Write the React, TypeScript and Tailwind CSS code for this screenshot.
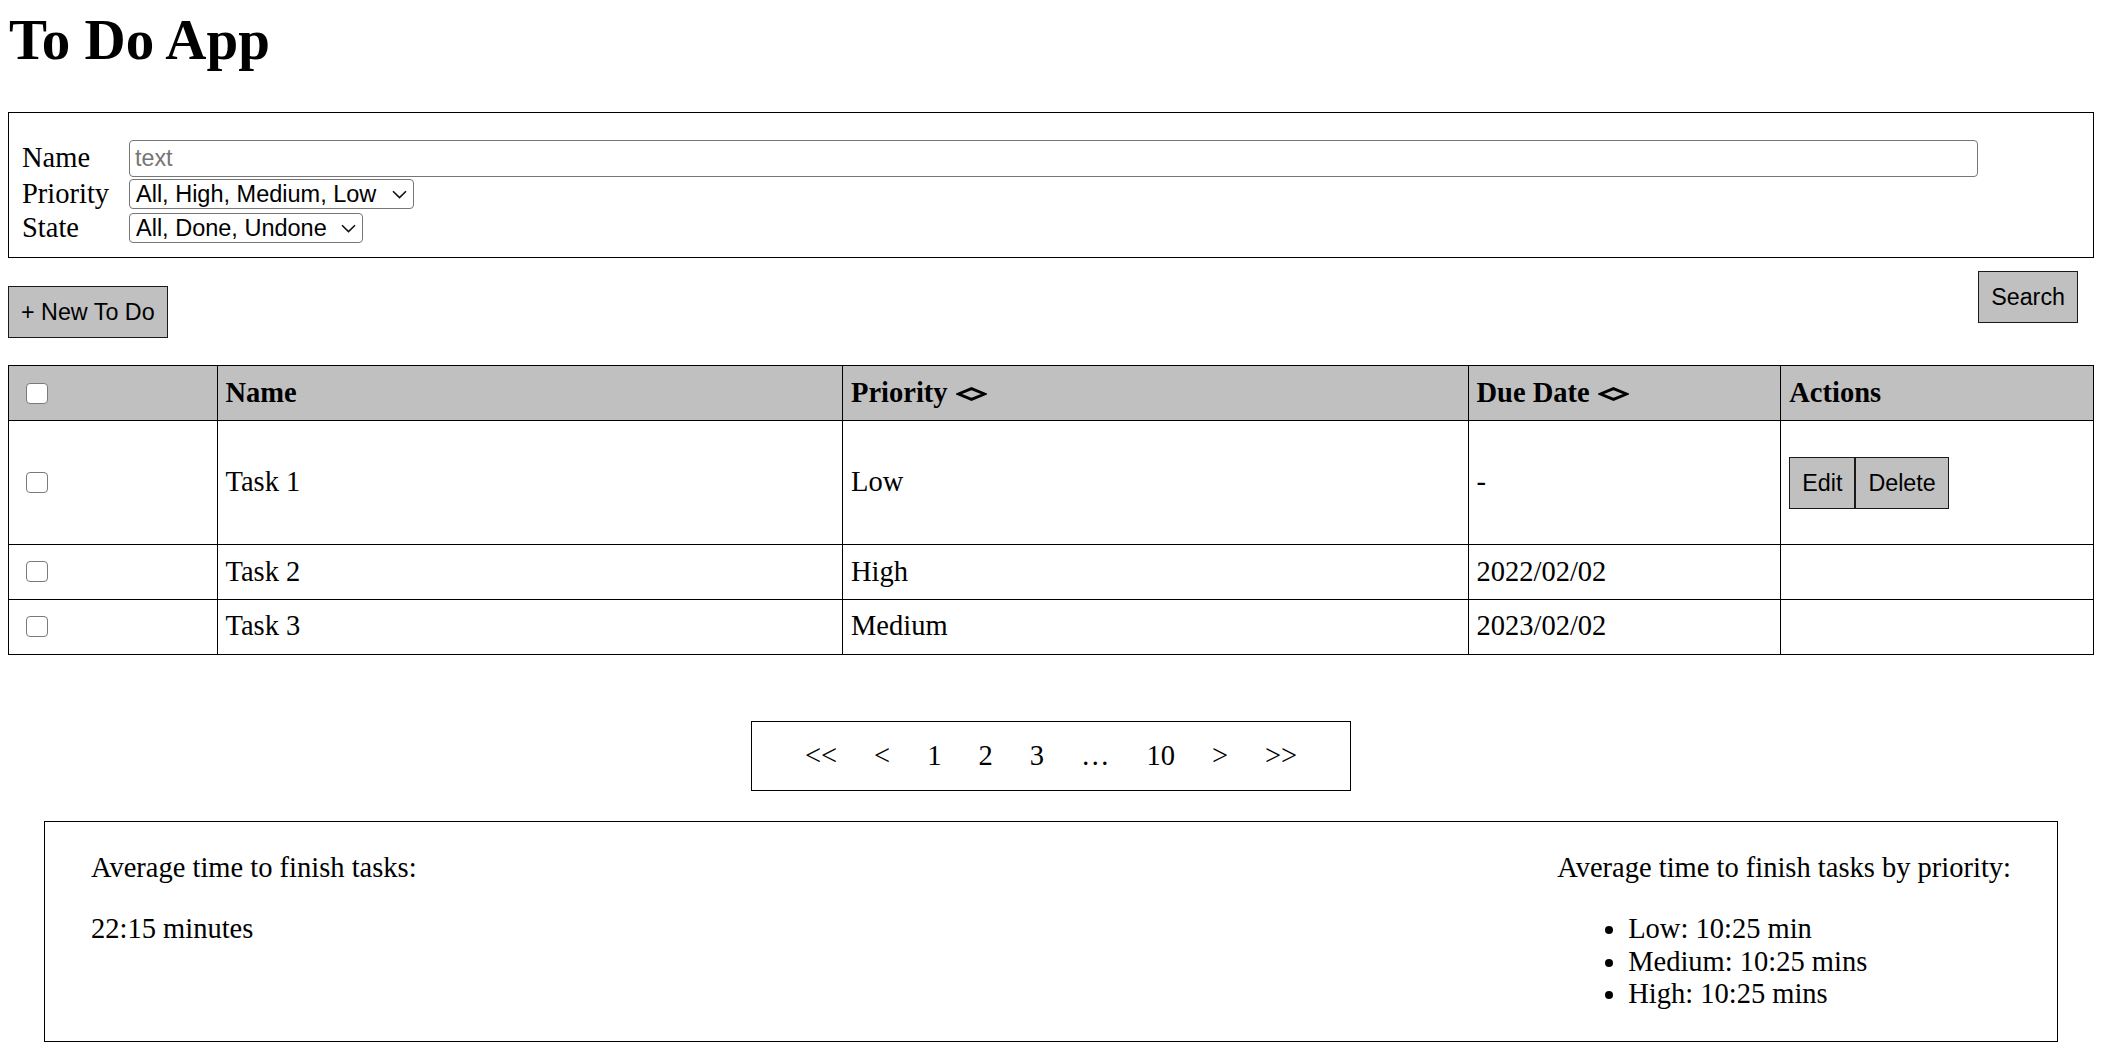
import React from "react";

const tasks = [
  { id: 1, name: "Task 1", priority: "Low", due: "-", editable: true },
  { id: 2, name: "Task 2", priority: "High", due: "2022/02/02", editable: false },
  { id: 3, name: "Task 3", priority: "Medium", due: "2023/02/02", editable: false },
];

const pages = ["<<", "<", "1", "2", "3", "…", "10", ">", ">>"];

const btn =
  "bg-[#c0c0c0] border border-[#1a1a1a] font-['Liberation_Sans',Arial,sans-serif] text-[23.3px] leading-[26px] px-[12px] py-[12px] text-black";

const cell = "border border-black px-[8px] py-[10.5px]";

function SortIcon() {
  return (
    <svg
      width="31"
      height="14"
      viewBox="0 0 31 14"
      className="inline-block ml-[8px] align-middle -mt-[3px]"
    >
      <path
        d="M15.5 1.6 L28.6 7 L15.5 12.4 L2.4 7 Z"
        fill="none"
        stroke="black"
        strokeWidth="2.8"
      />
    </svg>
  );
}

function Chevron() {
  return (
    <svg width="15" height="9" viewBox="0 0 15 9" className="shrink-0">
      <path d="M1 1.2 L7.5 7.6 L14 1.2" fill="none" stroke="#111" strokeWidth="1.6" />
    </svg>
  );
}

function Check() {
  return (
    <input
      type="checkbox"
      className="appearance-none block w-[22px] h-[21px] ml-[9px] border border-[#7a7a7a] rounded-[4px] bg-white"
    />
  );
}

function FakeSelect({ label, width }: { label: string; width: string }) {
  return (
    <div
      className={`flex items-center justify-between h-[30px] ${width} border border-[#767676] rounded-[4px] pl-[6px] pr-[6px] font-['Liberation_Sans',Arial,sans-serif] text-[23.5px] leading-[28px]`}
    >
      <span>{label}</span>
      <Chevron />
    </div>
  );
}

export default function App() {
  return (
    <div className="min-h-screen bg-white text-black pl-[8px] pr-[12px] font-['Liberation_Serif','Times_New_Roman',serif] text-[28.5px] leading-[32.7px]">
      <h1 className="text-[57px] font-bold leading-[65px] pt-[7px] ml-[1px] mb-[40px]">
        To Do App
      </h1>

      <div className="border border-black pt-[27px] pb-[13px] pl-[13px]">
        <div className="grid grid-cols-[107px_auto] gap-y-[1px] items-center">
          <span>Name</span>
          <input
            type="text"
            placeholder="text"
            className="w-[1849px] h-[37px] border border-[#767676] rounded-[4px] px-[5px] font-['Liberation_Sans',Arial,sans-serif] text-[23.3px] placeholder:text-[#757575] outline-none"
          />
          <span>Priority</span>
          <FakeSelect label="All, High, Medium, Low" width="w-[285px]" />
          <span>State</span>
          <FakeSelect label="All, Done, Undone" width="w-[234px]" />
        </div>
      </div>

      <div className="flex justify-between items-start">
        <button className={`${btn} mt-[28px]`}>+ New To Do</button>
        <button className={`${btn} mt-[13px] mr-[16px]`}>Search</button>
      </div>

      <table className="w-full table-fixed border-collapse border border-black mt-[27px]">
        <colgroup>
          <col className="w-[10%]" />
          <col className="w-[30%]" />
          <col className="w-[30%]" />
          <col className="w-[15%]" />
          <col className="w-[15%]" />
        </colgroup>
        <thead>
          <tr className="bg-[#c0c0c0]">
            <th className={`${cell} text-left align-middle`}>
              <Check />
            </th>
            <th className={`${cell} text-left`}>Name</th>
            <th className={`${cell} text-left`}>
              Priority
              <SortIcon />
            </th>
            <th className={`${cell} text-left`}>
              Due Date
              <SortIcon />
            </th>
            <th className={`${cell} text-left`}>Actions</th>
          </tr>
        </thead>
        <tbody>
          {tasks.map((t) => (
            <tr key={t.id}>
              <td className={`${cell} align-middle`}>
                <Check />
              </td>
              <td className={cell}>{t.name}</td>
              <td className={cell}>{t.priority}</td>
              <td className={cell}>{t.due}</td>
              <td className={cell}>
                {t.editable && (
                  <div className="flex py-[25px]">
                    <button className={`${btn} py-[11px]`}>Edit</button>
                    <button className={`${btn} py-[11px]`}>Delete</button>
                  </div>
                )}
              </td>
            </tr>
          ))}
        </tbody>
      </table>

      <div className="flex justify-center mt-[66px]">
        <div className="flex gap-[37px] border border-black px-[53px] py-[18px]">
          {pages.map((p) => (
            <span key={p}>{p}</span>
          ))}
        </div>
      </div>

      <div className="mx-[36px] mt-[30px] border border-black flex justify-between px-[46px] py-[1px]">
        <div>
          <p className="my-[28.5px]">Average time to finish tasks:</p>
          <p className="my-[28.5px]">22:15 minutes</p>
        </div>
        <div>
          <p className="my-[28.5px]">Average time to finish tasks by priority:</p>
          <ul className="list-disc pl-[71px] mb-[28.5px]">
            <li>Low: 10:25 min</li>
            <li>Medium: 10:25 mins</li>
            <li>High: 10:25 mins</li>
          </ul>
        </div>
      </div>
    </div>
  );
}
